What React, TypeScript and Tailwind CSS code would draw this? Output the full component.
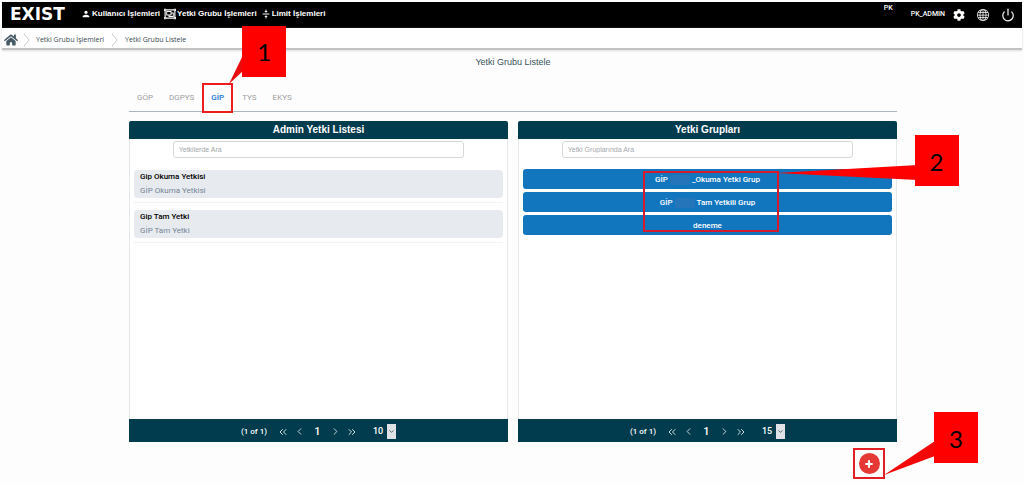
import React from "react";
import { MdPerson, MdVerticalAlignCenter } from "react-icons/md";
import { FaCog, FaHome, FaRegObjectGroup } from "react-icons/fa";
import { BsGlobe } from "react-icons/bs";
import { ChevronLeft, ChevronRight, ChevronsLeft, ChevronsRight, Power, Plus, ChevronDown } from "lucide-react";

const menu = [
  { label: "Kullanıcı İşlemleri", Icon: MdPerson, size: "size-[10px]" },
  { label: "Yetki Grubu İşlemleri", Icon: FaRegObjectGroup, size: "size-[12px]" },
  { label: "Limit İşlemleri", Icon: MdVerticalAlignCenter, size: "size-[10px]" },
];

const permissions = [
  { name: "Gip Okuma Yetkisi", detail: "GİP Okuma Yetkisi" },
  { name: "Gip Tam Yetki", detail: "GİP Tam Yetki" },
];

const groups = [
  { prefix: "GİP", name: "_Okuma Yetki Grup" },
  { prefix: "GİP", name: "Tam Yetkili Grup" },
  { prefix: "", name: "deneme" },
];

function CalloutBadge({ label, place }: { label: string; place: string }) {
  return (
    <span
      className={`absolute flex h-[51px] w-[44px] items-center justify-center bg-[#fe0000] pt-[2px] font-['Lato',sans-serif] text-[24px] font-normal text-black ${place}`}
    >
      {label}
    </span>
  );
}

function Header() {
  return (
    <header className="flex h-[26px] items-center bg-black pr-[7px] pl-[8px] text-white">
      <a href="#" className="w-[70px] pb-[2px] font-['DejaVu_Sans',sans-serif] text-[17px] leading-[24px] font-bold">
        EXIST
      </a>
      <nav className="flex flex-1 items-center gap-[4px] pb-[3px] pl-[1px] font-['Liberation_Sans',sans-serif] text-[8px] font-bold">
        {menu.map(({ label, Icon, size }) => (
          <a key={label} href="#" className="flex items-center gap-[1px] whitespace-nowrap">
            <Icon className={size} />
            {label}
          </a>
        ))}
      </nav>
      <div className="flex h-full items-center">
        <span className="self-start pt-[2px] pr-[18px] text-[7px] leading-[8px] font-medium">PK</span>
        <span className="pr-[8px] pb-[2px] text-[7px] leading-[10px] font-medium">PK_ADMIN</span>
        <div className="flex items-center gap-[12px]">
          <button aria-label="Ayarlar"><FaCog className="size-[12px]" /></button>
          <button aria-label="Dil"><BsGlobe className="size-[12px]" /></button>
          <button aria-label="Çıkış"><Power className="size-[14px]" strokeWidth={2} /></button>
        </div>
      </div>
    </header>
  );
}

function Separator({ className }: { className: string }) {
  return (
    <svg className={`h-[14px] w-[7px] ${className}`} viewBox="0 0 7 14" fill="none" stroke="#c4c9cc" aria-hidden="true">
      <path d="M1 1 L6 7 L1 13" />
    </svg>
  );
}

function Breadcrumb() {
  return (
    <nav
      aria-label="Konum"
      className="flex h-[22px] items-center border-b-2 border-[#c2c2c2] bg-white pt-[4px] pl-[2px] font-['Open_Sans',sans-serif] text-[7px] text-[#37474f] shadow-[0_1px_2px_#dcdcdc]"
    >
      <a href="#" aria-label="Ana sayfa"><FaHome className="size-[14px] text-[#455a64]" /></a>
      <Separator className="mr-[6px] ml-[5px]" />
      <a href="#">Yetki Grubu İşlemleri</a>
      <Separator className="mx-[7px]" />
      <a href="#">Yetki Grubu Listele</a>
    </nav>
  );
}

function Tabs() {
  return (
    <div role="tablist" className="flex h-[28px] items-center border-b border-[#a9b8be] pl-[8px] text-[8px] text-[#9e9e9e]">
      <button role="tab" className="mr-[16px]">GÖP</button>
      <button role="tab" className="mr-[8px]">DGPYS</button>
      <button role="tab" aria-selected="true" className="relative flex h-[30px] w-[31px] shrink-0 items-center justify-center font-medium text-[#1976d2]">
        GİP
        <span className="absolute inset-0 border-2 border-[#ee1c1c]" />
        <svg className="absolute -top-[30px] left-[26px] h-[32px] w-[16px]" viewBox="0 0 16 32" aria-hidden="true">
          <path d="M1 31 L16 0 L16 17 Z" fill="#e80c0c" />
        </svg>
        <CalloutBadge label="1" place="-top-[57px] left-[40px]" />
      </button>
      <button role="tab" className="mr-[16px] ml-[9px]">TYS</button>
      <button role="tab">EKYS</button>
    </div>
  );
}

function Pager({ label, size }: { label: string; size: string }) {
  return (
    <footer className="flex h-[23px] items-center justify-center bg-[#003c4e] pt-[2px] text-[8px] font-medium text-white">
      <span>(1 of 1)</span>
      <div className="ml-[10px] flex items-center gap-[5px] text-[#d3dde1]">
        <button aria-label="İlk sayfa"><ChevronsLeft className="size-[12px]" /></button>
        <button aria-label="Önceki sayfa"><ChevronLeft className="size-[11px]" /></button>
        <button className="w-[15px] text-[11px] leading-[12px] text-white">1</button>
        <button aria-label="Sonraki sayfa"><ChevronRight className="size-[11px]" /></button>
        <button aria-label="Son sayfa"><ChevronsRight className="size-[12px]" /></button>
      </div>
      <div className="relative ml-[15px] flex h-[15px] w-[23px]">
        <select aria-label={label} defaultValue={size} className="w-full appearance-none bg-transparent text-[9px]">
          <option value={size}>{size}</option>
        </select>
        <span className="pointer-events-none absolute inset-y-0 right-0 flex w-[9px] items-center justify-center bg-[#e0e3e5] text-[#455a64]">
          <ChevronDown className="size-[7px]" strokeWidth={3} />
        </span>
      </div>
    </footer>
  );
}

function Panel({ title, placeholder, size, children }: { title: string; placeholder: string; size: string; children: React.ReactNode }) {
  return (
    <section className="flex min-w-0 flex-1 flex-col">
      <h2 className="h-[18px] rounded-t-[2px] bg-[#003c4e] text-center font-['Liberation_Sans',sans-serif] text-[10px] leading-[18px] font-bold text-white">
        {title}
      </h2>
      <div className="flex min-h-[280px] flex-1 flex-col border-x border-[#e3e8ea] bg-white px-[4px] pt-[2px]">
        <input
          type="text"
          aria-label={placeholder}
          placeholder={placeholder}
          className="mx-auto h-[17px] w-[79%] rounded-[3px] border border-[#d5d9dc] bg-white px-[5px] font-['Liberation_Sans',sans-serif] text-[7px] placeholder:text-[#a3a8ab]"
        />
        {children}
      </div>
      <Pager label={`${title} sayfa boyutu`} size={size} />
    </section>
  );
}

export default function App() {
  return (
    <div className="min-h-screen bg-[#fdfdfd] px-[2px] pt-[2px] font-['Roboto',sans-serif]">
      <Header />
      <Breadcrumb />
      <main className="pr-[125px] pl-[127px]">
        <h1 className="pt-[6px] text-center font-['Liberation_Sans',sans-serif] text-[9px] leading-[12px] font-medium text-[#37505c]">
          Yetki Grubu Listele
        </h1>
        <div className="pt-[16px]">
          <Tabs />
        </div>
        <div className="flex gap-[10px] pt-[9px]">
          <Panel title="Admin Yetki Listesi" placeholder="Yetkilerde Ara" size="10">
            <ul className="mt-[12px]">
              {permissions.map((p) => (
                <li key={p.name} className="mb-[7px] border-b border-[#f0f2f4] pb-[4px]">
                  <div className="h-[28px] rounded-[4px] bg-[#e7ebef] px-[6px] text-[8px] leading-[14px]">
                    <p className="font-medium text-black">{p.name}</p>
                    <p className="text-[#748596]">{p.detail}</p>
                  </div>
                </li>
              ))}
            </ul>
          </Panel>
          <Panel title="Yetki Grupları" placeholder="Yetki Gruplarında Ara" size="15">
            <div className="relative mt-[11px] flex flex-col gap-[3px]">
              {groups.map((g) => (
                <button
                  key={g.name}
                  className="flex h-[20px] items-center justify-center rounded-[3px] bg-[#1276bf] pt-[1px] text-[8px] font-medium text-white"
                >
                  {g.prefix && (
                    <>
                      <span>{g.prefix}</span>
                      <span className="mx-[2px] h-[10px] w-[20px] bg-[#2475ba]" />
                    </>
                  )}
                  <span>{g.name}</span>
                </button>
              ))}
              <div className="pointer-events-none absolute top-[2px] left-1/2 h-[61px] w-[136px] -translate-x-[65px] border-2 border-[#d51b2e]">
                <svg className="absolute -top-[10px] left-[131px] h-[18px] w-[142px]" viewBox="0 0 142 18" aria-hidden="true">
                  <path d="M0 10 L142 2 L142 17 Z" fill="#fe0000" />
                </svg>
                <CalloutBadge label="2" place="-top-[38px] left-[270px]" />
              </div>
            </div>
          </Panel>
        </div>
        <div className="flex justify-end pt-[6px] pr-[12px]">
          <div className="relative flex h-[31px] w-[32px] items-center justify-center border-2 border-[#e11f24]">
            <button aria-label="Ekle" className="flex size-[21px] items-center justify-center rounded-full bg-[#e53935] text-white">
              <Plus className="size-[10px]" strokeWidth={5} />
            </button>
            <svg className="absolute -top-[11px] left-[28px] h-[36px] w-[52px]" viewBox="0 0 52 36" aria-hidden="true">
              <path d="M1 36 L52 2 L52 17 Z" fill="#f20808" />
            </svg>
            <CalloutBadge label="3" place="-top-[38px] left-[79px]" />
          </div>
        </div>
      </main>
    </div>
  );
}
